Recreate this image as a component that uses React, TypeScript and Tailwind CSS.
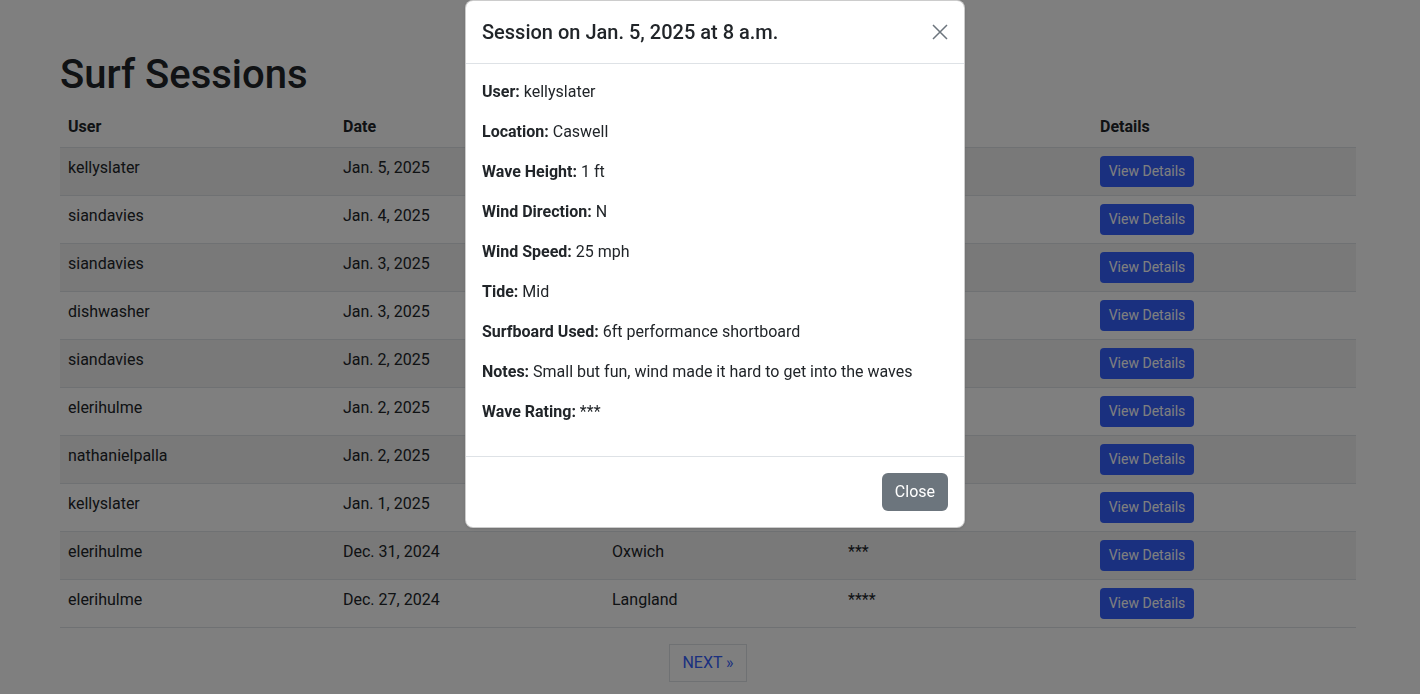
const sessions = [
  { user: "kellyslater", date: "Jan. 5, 2025", location: "Caswell", rating: "***" },
  { user: "siandavies", date: "Jan. 4, 2025", location: "Rhossili", rating: "****" },
  { user: "siandavies", date: "Jan. 3, 2025", location: "Llangennith", rating: "***" },
  { user: "dishwasher", date: "Jan. 3, 2025", location: "Caswell", rating: "**" },
  { user: "siandavies", date: "Jan. 2, 2025", location: "Langland", rating: "***" },
  { user: "elerihulme", date: "Jan. 2, 2025", location: "Langland", rating: "****" },
  { user: "nathanielpalla", date: "Jan. 2, 2025", location: "Langland", rating: "***" },
  { user: "kellyslater", date: "Jan. 1, 2025", location: "Oxwich", rating: "**" },
  { user: "elerihulme", date: "Dec. 31, 2024", location: "Oxwich", rating: "***" },
  { user: "elerihulme", date: "Dec. 27, 2024", location: "Langland", rating: "****" },
];

const details: [string, string][] = [
  ["User:", "kellyslater"],
  ["Location:", "Caswell"],
  ["Wave Height:", "1 ft"],
  ["Wind Direction:", "N"],
  ["Wind Speed:", "25 mph"],
  ["Tide:", "Mid"],
  ["Surfboard Used:", "6ft performance shortboard"],
  ["Notes:", "Small but fun, wind made it hard to get into the waves"],
  ["Wave Rating:", "***"],
];

export default function App() {
  return (
    <div className="relative min-h-[694px] bg-white text-[#212529] font-['Roboto',sans-serif] text-base leading-6">
      <main className="pl-[60px] pr-[64px] pt-[51px]">
        <h1 className="text-[40px] leading-[48px] font-medium mb-2">Surf Sessions</h1>

        <table className="w-full border-collapse mb-4 text-left">
          <thead>
            <tr className="border-b border-[#dee2e6]">
              <th className="w-[275px] px-2 py-2 font-bold">User</th>
              <th className="w-[269px] px-2 py-2 font-bold">Date</th>
              <th className="w-[236px] px-2 py-2 font-bold">Location</th>
              <th className="w-[252px] px-2 py-2 font-bold">Wave Rating</th>
              <th className="px-2 py-2 font-bold">Details</th>
            </tr>
          </thead>
          <tbody>
            {sessions.map((s, i) => (
              <tr
                key={i}
                className={`border-b border-[#dee2e6] align-top ${i % 2 === 0 ? "bg-[#f2f2f2]" : "bg-white"}`}
              >
                <td className="px-2 py-2">{s.user}</td>
                <td className="px-2 py-2">{s.date}</td>
                <td className="px-2 py-2">{s.location}</td>
                <td className="px-2 py-2">{s.rating}</td>
                <td className="px-2 pt-2 pb-2">
                  <button className="block w-[94px] bg-[#3461ff] text-white text-sm leading-[21px] py-[5px] rounded">
                    View Details
                  </button>
                </td>
              </tr>
            ))}
          </tbody>
        </table>

        <div className="flex justify-center">
          <button className="border border-[#dee2e6] text-[#3461ff] px-3 py-[6px] leading-6">
            NEXT »
          </button>
        </div>
      </main>

      <div className="fixed inset-0 bg-black/50" />

      <div className="absolute left-[465px] top-0 w-[500px] bg-white rounded-lg border border-black/20 shadow-sm">
        <div className="flex items-center justify-between px-4 py-4 border-b border-[#dee2e6]">
          <h5 className="text-xl leading-[30px] font-medium">Session on Jan. 5, 2025 at 8 a.m.</h5>
          <button className="flex items-center justify-center w-4 h-4 text-[#6c757d]">
            <svg viewBox="0 0 16 16" className="w-[16px] h-[16px]" fill="none" stroke="currentColor" strokeWidth="1.5">
              <path d="M1 1l14 14M15 1L1 15" />
            </svg>
          </button>
        </div>
        <div className="p-4">
          {details.map(([label, value]) => (
            <p key={label} className="mb-4">
              <strong className="font-bold">{label}</strong> {value}
            </p>
          ))}
        </div>
        <div className="flex justify-end px-3 py-3 border-t border-[#dee2e6]">
          <button className="m-1 bg-[#6c757d] text-white px-[13px] py-[7px] leading-6 rounded-md">Close</button>
        </div>
      </div>
    </div>
  );
}
